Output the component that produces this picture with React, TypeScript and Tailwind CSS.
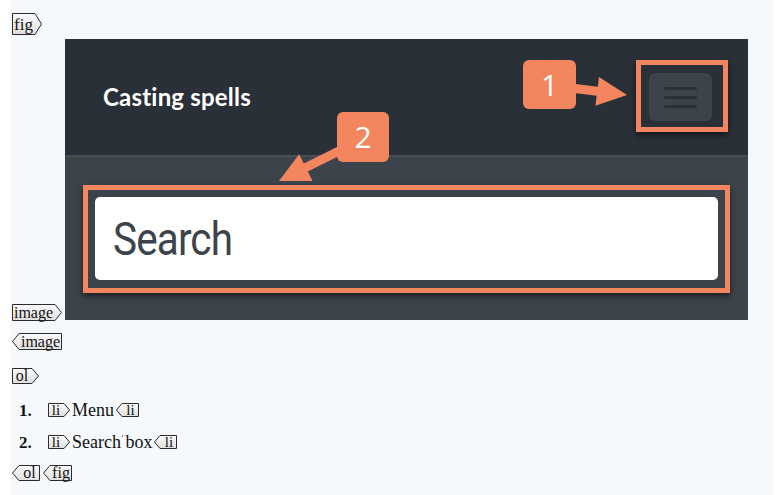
import React, { useId } from "react";

const ORANGE = "#f4865f";

function Tag({
  label,
  kind,
  w,
  h,
  fs = 16,
  a = 7,
}: {
  label: string;
  kind: "open" | "close";
  w: number;
  h: number;
  fs?: number;
  a?: number;
}) {
  const id = useId().replace(/:/g, "");
  const pts =
    kind === "open"
      ? `0.5,0.5 ${w - a},0.5 ${w - 0.5},${h / 2} ${w - a},${h - 0.5} 0.5,${h - 0.5}`
      : `${a},0.5 ${w - 0.5},0.5 ${w - 0.5},${h - 0.5} ${a},${h - 0.5} 0.5,${h / 2}`;
  return (
    <span
      className="relative flex shrink-0 items-center justify-center"
      style={{
        width: w,
        height: h,
        paddingLeft: kind === "close" ? a : 0,
        paddingRight: kind === "open" ? a : 0,
      }}
    >
      <svg className="absolute left-0 top-0" width={w} height={h}>
        <defs>
          <linearGradient id={`g${id}`} x1="0" y1="0" x2="0" y2="1">
            <stop offset="0" stopColor="#fbfbfb" />
            <stop offset="1" stopColor="#dedede" />
          </linearGradient>
        </defs>
        <polygon points={pts} fill={`url(#g${id})`} stroke="#2b2b2b" strokeWidth="1" />
      </svg>
      <span className="relative leading-none text-[#141414]" style={{ fontSize: fs }}>
        {label}
      </span>
    </span>
  );
}

function arrowPts(x1: number, y1: number, x2: number, y2: number, sw = 9, hl = 30, hw = 30) {
  const dx = x2 - x1;
  const dy = y2 - y1;
  const L = Math.hypot(dx, dy);
  const ux = dx / L;
  const uy = dy / L;
  const px = -uy;
  const py = ux;
  const bx = x2 - ux * hl;
  const by = y2 - uy * hl;
  const p = (x: number, y: number) => `${x.toFixed(1)},${y.toFixed(1)}`;
  return [
    p(x1 + (px * sw) / 2, y1 + (py * sw) / 2),
    p(bx + (px * sw) / 2, by + (py * sw) / 2),
    p(bx + (px * hw) / 2, by + (py * hw) / 2),
    p(x2, y2),
    p(bx - (px * hw) / 2, by - (py * hw) / 2),
    p(bx - (px * sw) / 2, by - (py * sw) / 2),
    p(x1 - (px * sw) / 2, y1 - (py * sw) / 2),
  ].join(" ");
}

function Shot() {
  return (
    <div className="relative flex h-[281px] w-[683px] shrink-0 flex-col bg-[#3c434a]">
      <div className="flex h-[116px] items-center justify-between bg-[#2a3038] pl-[38px] pr-[36px]">
        <div
          className="text-[24px] font-bold leading-none tracking-[0.2px] text-white"
          style={{ fontFamily: "Lato, 'Open Sans', sans-serif" }}
        >
          Casting spells
        </div>
        <div className="flex h-[48px] w-[63px] flex-col items-center justify-center gap-[6px] rounded-[6px] bg-[#3c434a]">
          <span className="h-[3px] w-[33px] rounded-full bg-[#2a3038]" />
          <span className="h-[3px] w-[33px] rounded-full bg-[#2a3038]" />
          <span className="h-[3px] w-[33px] rounded-full bg-[#2a3038]" />
        </div>
      </div>
      <div className="h-[2px] bg-[#474e56]" />
      <div className="px-[30px] pt-[40px]">
        <div className="flex h-[83px] items-center rounded-[5px] bg-white pl-[18px]">
          <span
            className="origin-left scale-x-[0.88] text-[46px] leading-none tracking-[-1px] text-[#3c434a]"
            style={{ fontFamily: "Roboto, sans-serif" }}
          >
            Search
          </span>
        </div>
      </div>

      {/* annotations */}
      <div
        className="absolute left-[571px] top-[21px] h-[72px] w-[92px] border-[5px] shadow-[0_3px_6px_rgba(0,0,0,0.55)]"
        style={{ borderColor: ORANGE }}
      />
      <div
        className="absolute left-[18px] top-[146px] h-[108px] w-[647px] border-[5px] shadow-[0_3px_6px_rgba(0,0,0,0.55)]"
        style={{ borderColor: ORANGE }}
      />
      <svg className="absolute left-0 top-0" width={683} height={281}>
        <polygon points={arrowPts(506, 49, 562, 56, 9, 30, 29)} fill={ORANGE} />
        <polygon points={arrowPts(278, 110, 214, 142, 9, 30, 30)} fill={ORANGE} />
      </svg>
      <div
        className="absolute left-[458px] top-[21px] flex h-[49px] w-[53px] items-center justify-center rounded-[6px] text-[30px] leading-none text-white"
        style={{ backgroundColor: ORANGE, fontFamily: "'Open Sans', sans-serif" }}
      >
        1
      </div>
      <div
        className="absolute left-[272px] top-[73px] flex h-[50px] w-[52px] items-center justify-center rounded-[6px] text-[30px] leading-none text-white"
        style={{ backgroundColor: ORANGE, fontFamily: "'Open Sans', sans-serif" }}
      >
        2
      </div>
    </div>
  );
}

export default function App() {
  return (
    <div className="min-h-[495px] w-full bg-white">
      <div
        className="ml-[10px] flex min-h-[495px] w-[763px] flex-col items-start bg-[#f5f9fc] pl-[2px] pt-[13px] text-[#111]"
        style={{ fontFamily: "'Liberation Serif', serif" }}
      >
        <Tag label="fig" kind="open" w={30} h={22} fs={17} />
        <div className="mt-[4px] flex items-end gap-[3px]">
          <div className="mb-[-1px] flex">
            <Tag label="image" kind="open" w={50} h={17} fs={16} />
          </div>
          <Shot />
        </div>
        <div className="mt-[13px] flex">
          <Tag label="image" kind="close" w={50} h={17} fs={16} />
        </div>
        <div className="mt-[18px] flex">
          <Tag label="ol" kind="open" w={27} h={16} fs={16} />
        </div>
        <div className="mt-[19px] flex h-[14px] items-center text-[18px] leading-none">
          <span className="w-[36px] pl-[7px] text-[17px] font-bold">1.</span>
          <Tag label="li" kind="open" w={22} h={14} fs={15} a={6} />
          <span className="px-[2px]">Menu</span>
          <Tag label="li" kind="close" w={23} h={14} fs={15} a={6} />
        </div>
        <div className="mt-[18px] flex h-[14px] items-center text-[18px] leading-none">
          <span className="w-[36px] pl-[7px] text-[17px] font-bold">2.</span>
          <Tag label="li" kind="open" w={22} h={14} fs={15} a={6} />
          <span className="relative px-[2px]">
            Search
            <span className="relative">
              {" "}
              <span className="absolute left-[1px] top-[3px] h-[2px] w-[1px] bg-[#777]" />
            </span>
            box
          </span>
          <Tag label="li" kind="close" w={23} h={14} fs={15} a={6} />
        </div>
        <div className="mt-[16px] flex gap-[3px]">
          <Tag label="ol" kind="close" w={28} h={16} fs={16} />
          <Tag label="fig" kind="close" w={29} h={16} fs={16} />
        </div>
      </div>
    </div>
  );
}
